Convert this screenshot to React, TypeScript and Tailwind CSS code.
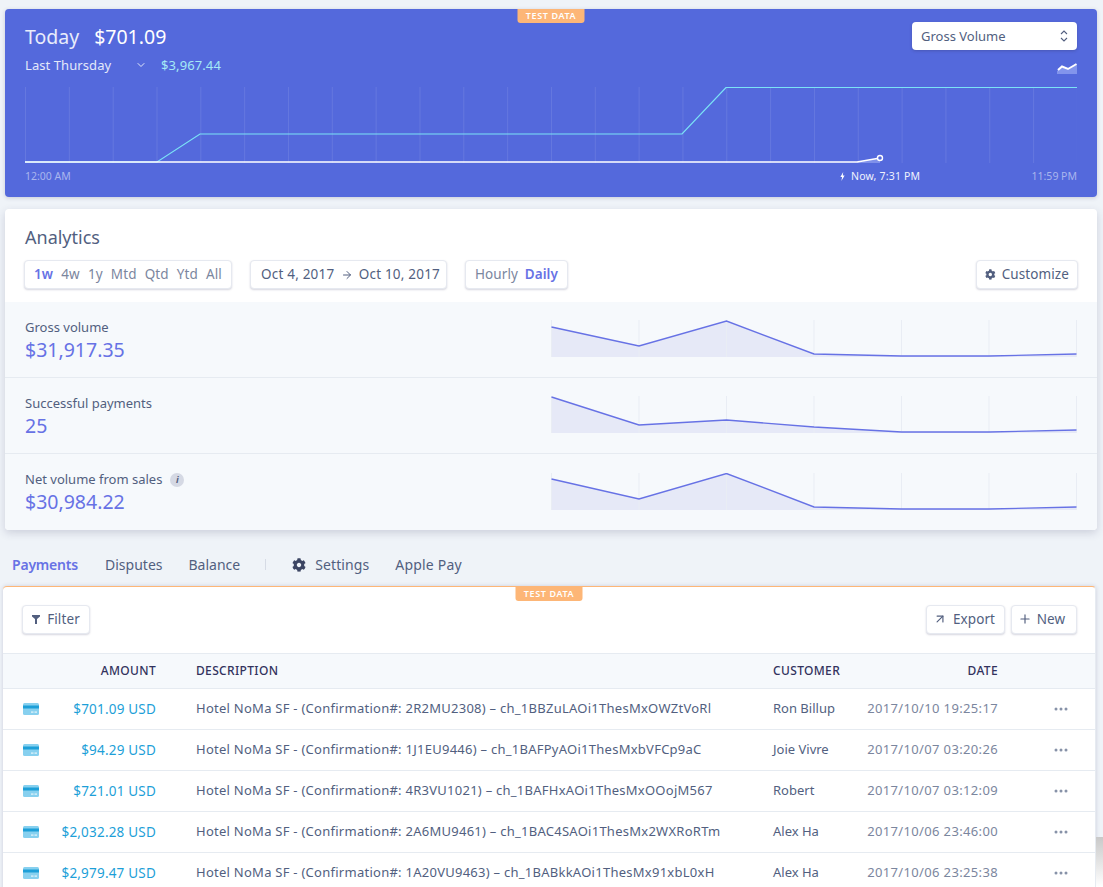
import React from 'react';
import { ArrowRight, ArrowUpRight, ChevronDown, Plus } from 'lucide-react';
import { FaCog } from 'react-icons/fa';

const hours = Array.from({ length: 25 }, (_, i) => i * 43.83);

const TestBadge = () => (
  <div className="absolute top-0 left-1/2 -translate-x-1/2 w-[67px] h-[14px] bg-[#fdb677] rounded-b-[3px] flex items-center justify-center text-[9px] font-semibold tracking-[0.6px] text-white">
    TEST DATA
  </div>
);

const TodayChart = () => (
  <svg width="1052" height="78" viewBox="0 0 1052 78" className="block mt-[7px]">
    {hours.map((x) => (
      <line key={x} x1={x + 0.5} x2={x + 0.5} y1="0" y2="76" stroke="#ffffff" strokeOpacity="0.1" />
    ))}
    <polyline points="0,75 132,75 175,47 657,47 701,0.5 1052,0.5" fill="none" stroke="#7be3f6" strokeWidth="1.2" />
    <polygon points="832,75 855,71 855,76 832,76" fill="#7f90ea" />
    <polyline points="0,75 832,75 855,71" fill="none" stroke="#ffffff" strokeWidth="1.6" />
    <circle cx="855" cy="71" r="2.5" fill="#5469dc" stroke="#ffffff" strokeWidth="1.4" />
  </svg>
);

const Hero = () => (
  <section className="relative h-[188px] rounded-[4px] bg-[#5469dc] shadow-[0_1px_4px_rgba(50,50,93,0.2)] px-5 text-white">
    <TestBadge />
    <div className="flex items-start justify-between pt-[13px] h-[41px]">
      <div className="flex text-[19.5px] leading-[30px] gap-[15px]">
        <span className="text-[#e8ecfb]">Today</span>
        <span>$701.09</span>
      </div>
      <div className="w-[165px] h-[28px] bg-white rounded-[4px] shadow-[0_1px_3px_rgba(50,50,93,0.3)] flex items-center justify-between pl-[9px] pr-[9px] text-[13px] leading-[30px] text-[#525f7f]">
        Gross Volume
        <svg width="8" height="14" viewBox="0 0 8 14" fill="none" stroke="#525f7f" strokeWidth="1.1">
          <path d="M1 5 4 2l3 3M1 9l3 3 3-3" />
        </svg>
      </div>
    </div>
    <div className="flex items-center justify-between h-[30px]">
      <div className="flex items-center text-[13px] leading-[32px]">
        <span className="text-[#e3e8fa] w-[110px] tracking-[0.08px]">Last Thursday</span>
        <ChevronDown size={12} strokeWidth={2} className="text-[#e3e8fa]" />
        <span className="ml-[14px] text-[#a5e9f6] tracking-[0.1px]">$3,967.44</span>
      </div>
      <svg width="20" height="11" viewBox="0 0 20 11" className="mt-[7px]">
        <polygon points="0,8 5,4 11,7 20,1 20,11 0,11" fill="#8294ec" />
        <polyline points="1,7 5,3.5 11,6 19.5,1" fill="none" stroke="#ffffff" strokeWidth="2" />
      </svg>
    </div>
    <TodayChart />
    <div className="relative flex justify-between text-[10.5px] leading-[14px] mt-[4px] text-[#a9b5ee]">
      <span>12:00 AM</span>
      <span className="absolute left-[815px] flex items-center gap-[6px] tracking-[0.2px] text-[#f0f2fc]">
        <svg width="5" height="9" viewBox="0 0 5 9" fill="#ffffff">
          <path d="M3.2 0 .4 5h1.7L1.4 9l3.2-5.4H2.8z" />
        </svg>
        Now, 7:31 PM
      </span>
      <span>11:59 PM</span>
    </div>
  </section>
);

const Pill = ({ children, className = '' }: { children: React.ReactNode; className?: string }) => (
  <div
    className={`h-[29px] bg-white rounded-[4px] border border-[#e6e9f0] shadow-[0_1px_2px_rgba(50,50,93,0.2)] flex items-center text-[13.5px] tracking-[0.1px] text-[#525f7f] ${className}`}
  >
    {children}
  </div>
);

const metrics = [
  {
    label: 'Gross volume',
    value: '$31,917.35',
    ys: [7, 26, 1, 34, 36, 36, 34],
  },
  {
    label: 'Successful payments',
    value: '25',
    ys: [1, 29, 24, 31, 36, 36, 34],
  },
  {
    label: 'Net volume from sales',
    value: '$30,984.22',
    info: true,
    ys: [6, 26, 0.5, 34, 36, 36, 34],
  },
];

const Spark = ({ ys }: { ys: number[] }) => {
  const xs = ys.map((_, i) => i * 87.5 + 0.5);
  const line = ys.map((y, i) => `${xs[i]},${y}`).join(' ');
  return (
    <svg width="526" height="38" viewBox="0 0 526 38" className="block">
      <polygon points={`0.5,37 ${line} 525.5,37`} fill="#e6e9f7" />
      {xs.map((x) => (
        <line key={x} x1={x} x2={x} y1="0" y2="37" stroke="#e9edf4" />
      ))}
      <polyline points={line} fill="none" stroke="#6772e5" strokeWidth="1.4" />
    </svg>
  );
};

const Analytics = () => (
  <section className="mt-3 rounded-[4px] bg-white shadow-[0_3px_8px_rgba(50,50,93,0.18)] overflow-hidden">
    <div className="px-5 pt-[15px] h-[93px]">
      <div className="text-[18px] leading-[26px] text-[#525f7f]">Analytics</div>
      <div className="flex items-center mt-[10px] -mx-px">
        <Pill className="w-[208px] justify-between px-[9px]">
          <span className="font-semibold text-[#6772e5]">1w</span>
          {['4w', '1y', 'Mtd', 'Qtd', 'Ytd', 'All'].map((range) => (
            <span key={range} className="text-[#7b869e]">
              {range}
            </span>
          ))}
        </Pill>
        <Pill className="w-[197px] ml-[18px] pl-[10px] pr-[6px] justify-between tracking-[0.2px]">
          <span>Oct 4, 2017</span>
          <ArrowRight size={12} />
          <span>Oct 10, 2017</span>
        </Pill>
        <Pill className="w-[103px] ml-[18px] px-[9px] justify-between">
          <span className="text-[#7b869e]">Hourly</span>
          <span className="font-semibold text-[#6772e5]">Daily</span>
        </Pill>
        <Pill className="w-[102px] ml-auto px-[8px] gap-[6px]">
          <FaCog size={11} />
          Customize
        </Pill>
      </div>
    </div>
    {metrics.map((m, i) => (
      <div
        key={m.label}
        className={`flex items-start justify-between bg-[#f6f9fc] px-5 h-[76px] ${i < 2 ? 'border-b border-[#e6ebf1]' : ''}`}
      >
        <div className="pt-[16px]">
          <div className="flex items-center gap-[8px] text-[13px] leading-[19px] text-[#525f7f]">
            {m.label}
            {m.info && (
              <span className="w-[14px] h-[14px] rounded-full bg-[#d5d9e4] flex items-center justify-center text-[9px] font-bold italic text-[#525f7f]">
                i
              </span>
            )}
          </div>
          <div className="text-[19.5px] leading-[26px] text-[#6772e5]">{m.value}</div>
        </div>
        <div className={i === 2 ? 'pt-[19px]' : 'pt-[18px]'}>
          <Spark ys={m.ys} />
        </div>
      </div>
    ))}
  </section>
);

const Tabs = () => (
  <nav className="flex items-center h-[56px] pt-[13px] text-[14px] text-[#525f7f] -ml-[2px]">
    <span className="font-semibold text-[#6772e5] ml-[9px] tracking-[-0.2px]">Payments</span>
    <span className="ml-[27px]">Disputes</span>
    <span className="ml-[26px]">Balance</span>
    <span className="ml-[25px] w-px h-[11px] bg-[#d6dbe5]" />
    <FaCog size={14} className="ml-[26px] text-[#3c4563]" />
    <span className="ml-[9px] tracking-[0.1px]">Settings</span>
    <span className="ml-[26px] tracking-[0.2px]">Apple Pay</span>
  </nav>
);

const rows = [
  ['$701.09 USD', 'Hotel NoMa SF - (Confirmation#: 2R2MU2308) – ch_1BBZuLAOi1ThesMxOWZtVoRl', 'Ron Billup', '2017/10/10 19:25:17'],
  ['$94.29 USD', 'Hotel NoMa SF - (Confirmation#: 1J1EU9446) – ch_1BAFPyAOi1ThesMxbVFCp9aC', 'Joie Vivre', '2017/10/07 03:20:26'],
  ['$721.01 USD', 'Hotel NoMa SF - (Confirmation#: 4R3VU1021) – ch_1BAFHxAOi1ThesMxOOojM567', 'Robert', '2017/10/07 03:12:09'],
  ['$2,032.28 USD', 'Hotel NoMa SF - (Confirmation#: 2A6MU9461) – ch_1BAC4SAOi1ThesMx2WXRoRTm', 'Alex Ha', '2017/10/06 23:46:00'],
  ['$2,979.47 USD', 'Hotel NoMa SF - (Confirmation#: 1A20VU9463) – ch_1BABkkAOi1ThesMx91xbL0xH', 'Alex Ha', '2017/10/06 23:25:38'],
];

const CardIcon = () => (
  <svg width="16" height="12" viewBox="0 0 16 12">
    <rect width="16" height="12" rx="1.5" fill="#87d0ef" />
    <rect y="2.5" width="16" height="3" fill="#1d9fd8" />
    <rect x="8" y="8.5" width="2.5" height="1.2" fill="#e6f5fb" />
    <rect x="11.5" y="8.5" width="2.5" height="1.2" fill="#e6f5fb" />
  </svg>
);

const Payments = () => (
  <section className="relative -ml-[2px] w-[1093px] rounded-t-[4px] bg-white border-t border-r border-t-[#fdb677] border-r-[#e6ebf1] shadow-[0_0_4px_rgba(50,50,93,0.18)]">
    <TestBadge />
    <div className="flex items-center pl-[19px] pr-[18px] pb-[2px] h-[66px]">
      <Pill className="w-[68px] justify-center gap-[7px]">
        <svg width="8" height="9" viewBox="0 0 8 9" fill="#525f7f">
          <path d="M0 0h8v1.6L5 4v5H3V4L0 1.6z" />
        </svg>
        Filter
      </Pill>
      <Pill className="ml-auto w-[79px] justify-center gap-[6px] pr-[3px]">
        <ArrowUpRight size={14} />
        Export
      </Pill>
      <Pill className="ml-[6px] w-[66px] justify-center gap-[5px] pr-[5px]">
        <Plus size={14} />
        New
      </Pill>
    </div>
    <div className="grid grid-cols-[153px_617px_94px_131px] items-center h-[36px] bg-[#f6f9fc] border-y border-[#e6ebf1] text-[12px] tracking-[0.35px] font-medium text-[#32325d]">
      <div className="text-right">AMOUNT</div>
      <div className="pl-10">DESCRIPTION</div>
      <div>CUSTOMER</div>
      <div className="text-right">DATE</div>
    </div>
    {rows.map((r) => (
      <div
        key={r[3]}
        className="grid grid-cols-[153px_617px_94px_131px_1fr] items-center h-[41px] border-b border-[#e6ebf1] text-[13px] text-[#525f7f]"
      >
        <div className="flex items-center justify-between pl-5">
          <CardIcon />
          <span className="text-[#1d9fd8] text-[13.5px] tracking-[0.2px]">{r[0]}</span>
        </div>
        <div className="pl-10 whitespace-nowrap tracking-[0.26px]">{r[1]}</div>
        <div className="whitespace-nowrap">{r[2]}</div>
        <div className="text-right whitespace-nowrap tracking-[0.35px] text-[#7b869e]">{r[3]}</div>
        <div className="flex justify-center pl-[29px]">
          <svg width="14" height="4" viewBox="0 0 14 4" fill="#8792a8">
            <circle cx="2" cy="2" r="1.5" />
            <circle cx="7" cy="2" r="1.5" />
            <circle cx="12" cy="2" r="1.5" />
          </svg>
        </div>
      </div>
    ))}
  </section>
);

export default function App() {
  return (
    <div className="relative h-screen overflow-hidden bg-[#eff3f8] pt-[9px] px-[5px] pr-[6px] font-['Noto_Sans',sans-serif]">
      <Hero />
      <Analytics />
      <Tabs />
      <Payments />
      {/* grey sliver at the bottom right of the capture */}
      <div className="absolute right-0 top-[837px] bottom-0 w-[7px] bg-gradient-to-b from-[#c9c9c9] to-white" />
    </div>
  );
}
